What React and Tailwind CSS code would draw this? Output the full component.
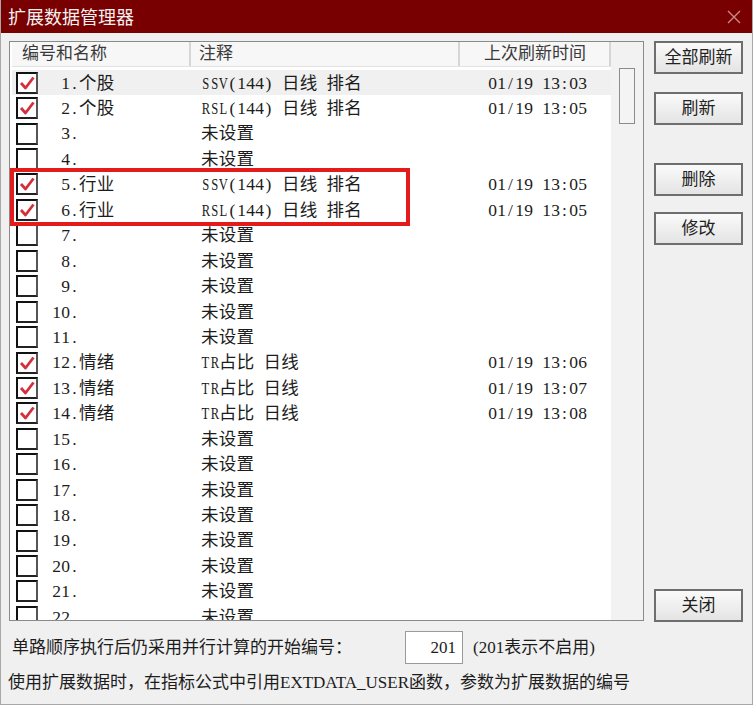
import React from "react";

const rows = [
  { n: 1, name: "个股", note: "SSV(144) 日线 排名", time: "01/19 13:03", on: true },
  { n: 2, name: "个股", note: "RSL(144) 日线 排名", time: "01/19 13:05", on: true },
  { n: 3 },
  { n: 4 },
  { n: 5, name: "行业", note: "SSV(144) 日线 排名", time: "01/19 13:05", on: true },
  { n: 6, name: "行业", note: "RSL(144) 日线 排名", time: "01/19 13:05", on: true },
  { n: 7 },
  { n: 8 },
  { n: 9 },
  { n: 10 },
  { n: 11 },
  { n: 12, name: "情绪", note: "TR占比 日线", time: "01/19 13:06", on: true },
  { n: 13, name: "情绪", note: "TR占比 日线", time: "01/19 13:07", on: true },
  { n: 14, name: "情绪", note: "TR占比 日线", time: "01/19 13:08", on: true },
  { n: 15 },
  { n: 16 },
  { n: 17 },
  { n: 18 },
  { n: 19 },
  { n: 20 },
  { n: 21 },
  { n: 22 },
];

const font = { fontFamily: '"Liberation Serif", "Noto Sans CJK SC", serif' };

// fixed-pitch cells, like the dialog's song-style font: half width for latin, full for CJK
const Cells = ({ text }) => (
  <span className="inline-flex">
    {[...text].map((ch, i) => {
      if (ch.charCodeAt(0) > 0x2e80) {
        return (
          <span key={i} className="inline-block w-[17.7px] text-center">
            {ch}
          </span>
        );
      }
      const upper = /[A-Z]/.test(ch);
      return (
        <span key={i} className="inline-flex w-[9px] justify-center">
          <span className={upper ? "inline-block scale-x-[0.72]" : "inline-block"}>
            {ch === " " ? "\u00a0" : ch}
          </span>
        </span>
      );
    })}
  </span>
);

const CheckBox = ({ on }) => (
  <div className="w-[22px] h-[22px] shrink-0 bg-white border-2 border-l-[#111] border-t-[#111] border-r-[#555] border-b-[#222] flex items-center justify-center">
    {on && (
      <svg width="18" height="18" viewBox="0 0 18 18">
        <path d="M3 9 L7.5 14 L15.5 3.5" fill="none" stroke="#d3303c" strokeWidth="2.8" strokeLinejoin="round" />
      </svg>
    )}
  </div>
);

const Btn = ({ children, className = "" }) => (
  <div
    className={`w-[89px] h-[33px] border-2 border-[#6e6e6e] bg-gradient-to-b from-[#fafafa] to-[#e4e4e4] flex items-center justify-center text-[17px] text-[#222] ${className}`}
  >
    {children}
  </div>
);

const Row = ({ r, index }) => {
  const num = (r.n < 10 ? " " : "") + r.n + ".";
  return (
    <div
      className={`h-[25.45px] shrink-0 flex items-center text-[17.5px] text-[#1c1c1c] ${index === 0 ? "bg-[#f0f0f0]" : ""}`}
    >
      <div className="w-[4px]" />
      <CheckBox on={r.on} />
      <div className="w-[14px]" />
      <div className="w-[149px] flex">
        <Cells text={num + (r.name || "")} />
      </div>
      <div className="w-[287px] flex">
        <Cells text={r.note || "未设置"} />
      </div>
      <div className="flex">
        <Cells text={r.time || ""} />
      </div>
    </div>
  );
};

export default function App() {
  return (
    <div
      className="w-[753px] h-[705px] bg-[#f0f0f0] flex flex-col overflow-hidden border-l border-r border-b border-[#a8a8a8] relative"
      style={font}
    >
      {/* title bar */}
      <div className="h-[33px] shrink-0 bg-[#780000] flex items-center justify-between pl-[7px] pr-[11px]">
        <span className="text-[18px] text-[#f4f0f0]" style={{ fontFamily: '"Noto Sans CJK SC", sans-serif' }}>
          扩展数据管理器
        </span>
        <svg width="14" height="14" viewBox="0 0 14 14">
          <path d="M1 1 L13 13 M13 1 L1 13" stroke="#c98a8a" strokeWidth="1.4" />
        </svg>
      </div>

      <div className="flex pl-[8px] pt-[8px]">
        {/* list */}
        <div className="w-[635px] h-[580px] border border-[#8a8a8a] bg-white flex overflow-hidden">
          <div className="w-[601px] flex flex-col pl-[2px]">
            <div className="h-[25px] shrink-0 flex bg-[#f7f7f7] border-b border-[#e3e3e3] text-[17px] text-[#3a3a3a]">
              <div className="w-[179px] pl-[10px] border-r-2 border-r-[#d6d6d6] flex items-center">编号和名称</div>
              <div className="w-[269px] pl-[8px] border-r-2 border-r-[#d6d6d6] flex items-center">注释</div>
              <div className="w-[151px] pl-[24px] border-r-2 border-r-[#d6d6d6] flex items-center">上次刷新时间</div>
            </div>
            <div className="flex flex-col pt-[3px]">
              {rows.map((r, i) => (
                <Row key={r.n} r={r} index={i} />
              ))}
            </div>
          </div>
          <div className="flex-1 bg-[#f2f2f2] flex justify-center pt-[26px]">
            <div className="w-[16px] h-[56px] border border-[#8c8c8c] bg-[#f4f4f4]" />
          </div>
        </div>

        {/* buttons */}
        <div className="ml-[10px] flex flex-col h-[580px]">
          <Btn>全部刷新</Btn>
          <Btn className="mt-[18px]">刷新</Btn>
          <Btn className="mt-[38px]">删除</Btn>
          <Btn className="mt-[16px]">修改</Btn>
          <Btn className="mt-auto mb-[-1px]">关闭</Btn>
        </div>
      </div>

      <div className="flex items-center pl-[11px] mt-[10px] h-[33px] text-[17px] text-[#1c1c1c]">
        <span>单路顺序执行后仍采用并行计算的开始编号：</span>
        <div className="ml-[53px] w-[58px] h-[33px] border border-[#9a9a9a] bg-white flex items-center justify-end pr-[6px]">
          201
        </div>
        <span className="ml-[10px]">(201表示不启用)</span>
      </div>
      <div className="pl-[7px] mt-[6px] text-[17px] text-[#1c1c1c]">
        使用扩展数据时，在指标公式中引用EXTDATA_USER函数，参数为扩展数据的编号
      </div>

      {/* red annotation box */}
      <div className="absolute left-[9px] top-[168px] w-[400px] h-[58px] border-4 border-[#e31b1b]" />
    </div>
  );
}
